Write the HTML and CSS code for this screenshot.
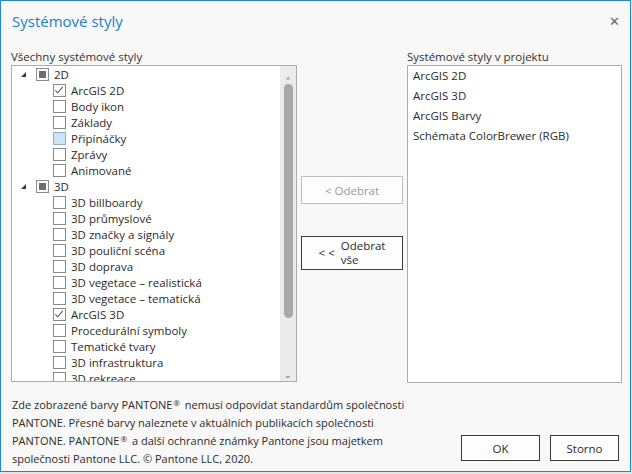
FILE: index.html
```html
<!DOCTYPE html>
<html lang="cs">
<head>
    <meta charset="UTF-8">
    <title>Systémové styly</title>
    <link rel="stylesheet" href="styles.css">
</head>
<body>
    <div class="dialog">
        <div class="header">
            <h1 class="title">Systémové styly</h1>
            <span class="close">&#x2715;</span>
        </div>

        <div class="columns">
            <div class="column left">
                <div class="label">Všechny systémové styly</div>
                <div class="listbox tree">
                    <div class="tree-items">
                        <div class="row parent"><span class="arrow"></span><span class="box partial"></span>2D</div>
                        <div class="row child"><span class="box checked"></span>ArcGIS 2D</div>
                        <div class="row child"><span class="box"></span>Body ikon</div>
                        <div class="row child"><span class="box"></span>Základy</div>
                        <div class="row child"><span class="box hover"></span>Připínáčky</div>
                        <div class="row child"><span class="box"></span>Zprávy</div>
                        <div class="row child"><span class="box"></span>Animované</div>
                        <div class="row parent"><span class="arrow"></span><span class="box partial"></span>3D</div>
                        <div class="row child"><span class="box"></span>3D billboardy</div>
                        <div class="row child"><span class="box"></span>3D průmyslové</div>
                        <div class="row child"><span class="box"></span>3D značky a signály</div>
                        <div class="row child"><span class="box"></span>3D pouliční scéna</div>
                        <div class="row child"><span class="box"></span>3D doprava</div>
                        <div class="row child"><span class="box"></span>3D vegetace – realistická</div>
                        <div class="row child"><span class="box"></span>3D vegetace – tematická</div>
                        <div class="row child"><span class="box checked"></span>ArcGIS 3D</div>
                        <div class="row child"><span class="box"></span>Procedurální symboly</div>
                        <div class="row child"><span class="box"></span>Tematické tvary</div>
                        <div class="row child"><span class="box"></span>3D infrastruktura</div>
                        <div class="row child"><span class="box"></span>3D rekreace</div>
                    </div>
                    <div class="scrollbar">
                        <span class="scroll-arrow up">&#x2038;</span>
                        <div class="thumb"></div>
                        <span class="scroll-arrow down">&#x2304;</span>
                    </div>
                </div>
            </div>

            <div class="middle">
                <button class="btn disabled">&lt; Odebrat</button>
                <button class="btn remove-all"><span class="chev">&lt; &lt;</span><span>Odebrat<br>vše</span></button>
            </div>

            <div class="column right">
                <div class="label">Systémové styly v projektu</div>
                <div class="listbox project">
                    <div class="item">ArcGIS 2D</div>
                    <div class="item">ArcGIS 3D</div>
                    <div class="item">ArcGIS Barvy</div>
                    <div class="item">Schémata ColorBrewer (RGB)</div>
                </div>
            </div>
        </div>

        <div class="footer">
            <p class="note">Zde zobrazené barvy PANTONE<sup>®</sup> nemusí odpovídat standardům společnosti PANTONE. Přesné barvy naleznete v aktuálních publikacích společnosti PANTONE. PANTONE<sup>®</sup> a další ochranné známky Pantone jsou majetkem společnosti Pantone LLC. © Pantone LLC, 2020.</p>
            <div class="actions">
                <button class="btn ok">OK</button>
                <button class="btn cancel">Storno</button>
            </div>
        </div>
    </div>
</body>
</html>
```

FILE: styles.css
```css
body {
    margin: 0;
    background: #e6e6e6;
    font-family: "Open Sans", "Noto Sans", sans-serif;
    font-size: 11.5px;
    color: #2b2b2b;
}

.dialog {
    width: 631px;
    height: 472px;
    box-sizing: border-box;
    border: 1px solid #1f86d6;
    background: #f8f8f8;
    display: flex;
    flex-direction: column;
}

.header {
    display: flex;
    justify-content: space-between;
    align-items: center;
    padding: 8px 12px 0 11px;
    height: 24px;
}

.title {
    margin: 0;
    font-size: 15px;
    font-weight: normal;
    color: #1c7fcf;
}

.close {
    font-size: 13px;
    color: #666;
    margin-right: -2px;
}

.columns {
    display: flex;
    padding: 17px 0 0 10px;
}

.label {
    height: 14px;
    line-height: 14px;
    margin-bottom: 1px;
    color: #333;
}

.listbox {
    border: 1px solid #acacac;
    background: #fff;
    height: 315px;
    overflow: hidden;
}

.tree {
    width: 284px;
    display: flex;
}

.tree-items {
    flex: 1;
}

.row {
    height: 16px;
    display: flex;
    align-items: center;
    white-space: nowrap;
}

.row.parent {
    padding-left: 9px;
}

.row.child {
    padding-left: 41px;
}

.arrow {
    width: 0;
    height: 0;
    border-left: 5px solid transparent;
    border-bottom: 5px solid #3c3c3c;
    margin-right: 10px;
}

.box {
    width: 11px;
    height: 11px;
    border: 1px solid #8a8a8a;
    background: #fff;
    margin-right: 5px;
    position: relative;
    flex-shrink: 0;
}

.box.partial::after {
    content: "";
    position: absolute;
    left: 2px;
    top: 2px;
    width: 7px;
    height: 7px;
    background: #6e6e6e;
}

.box.checked::after {
    content: "";
    position: absolute;
    left: 3px;
    top: 0;
    width: 3px;
    height: 7px;
    border-right: 1px solid #555;
    border-bottom: 1px solid #555;
    transform: rotate(40deg);
}

.box.hover {
    background: #cce4f7;
    border-color: #8fb0cc;
}

.scrollbar {
    width: 16px;
    background: #ebebeb;
    display: flex;
    flex-direction: column;
    align-items: center;
}

.scroll-arrow {
    font-size: 9px;
    color: #606060;
    height: 13px;
    line-height: 13px;
}

.scroll-arrow.up {
    margin-top: 2px;
}

.thumb {
    width: 9px;
    flex: 1;
    margin: 3px 0 50px;
    background: #a8a8a8;
    border-radius: 5px;
}

.middle {
    width: 106px;
    padding: 126px 0 0 4px;
    display: flex;
    flex-direction: column;
    gap: 32px;
}

.btn {
    font-family: inherit;
    font-size: 11.5px;
    background: #fdfdfd;
    border: 1px solid #3a3a3a;
    color: #2b2b2b;
    padding: 0;
}

.middle .btn {
    width: 102px;
}

.btn.disabled {
    height: 28px;
    border-color: #bdbdbd;
    color: #9c9c9c;
}

.btn.remove-all {
    height: 34px;
    display: flex;
    align-items: center;
    justify-content: center;
    gap: 6px;
    text-align: left;
    line-height: 14px;
}

.right .listbox {
    width: 213px;
    padding-top: 1px;
}

.item {
    height: 20px;
    line-height: 18px;
    padding-left: 5px;
}

.footer {
    display: flex;
    justify-content: space-between;
    align-items: flex-start;
    padding: 13px 11px 0 11px;
}

.note {
    margin: 0;
    width: 400px;
    font-size: 11px;
    line-height: 18px;
    color: #2b2b2b;
}

.note sup {
    font-size: 8px;
    line-height: 0;
    vertical-align: 3px;
    margin: 0 2px 0 1px;
}

.actions {
    display: flex;
    gap: 10px;
    margin-top: 39px;
}

.btn.ok {
    width: 79px;
    height: 26px;
}

.btn.cancel {
    width: 69px;
    height: 26px;
}
```
